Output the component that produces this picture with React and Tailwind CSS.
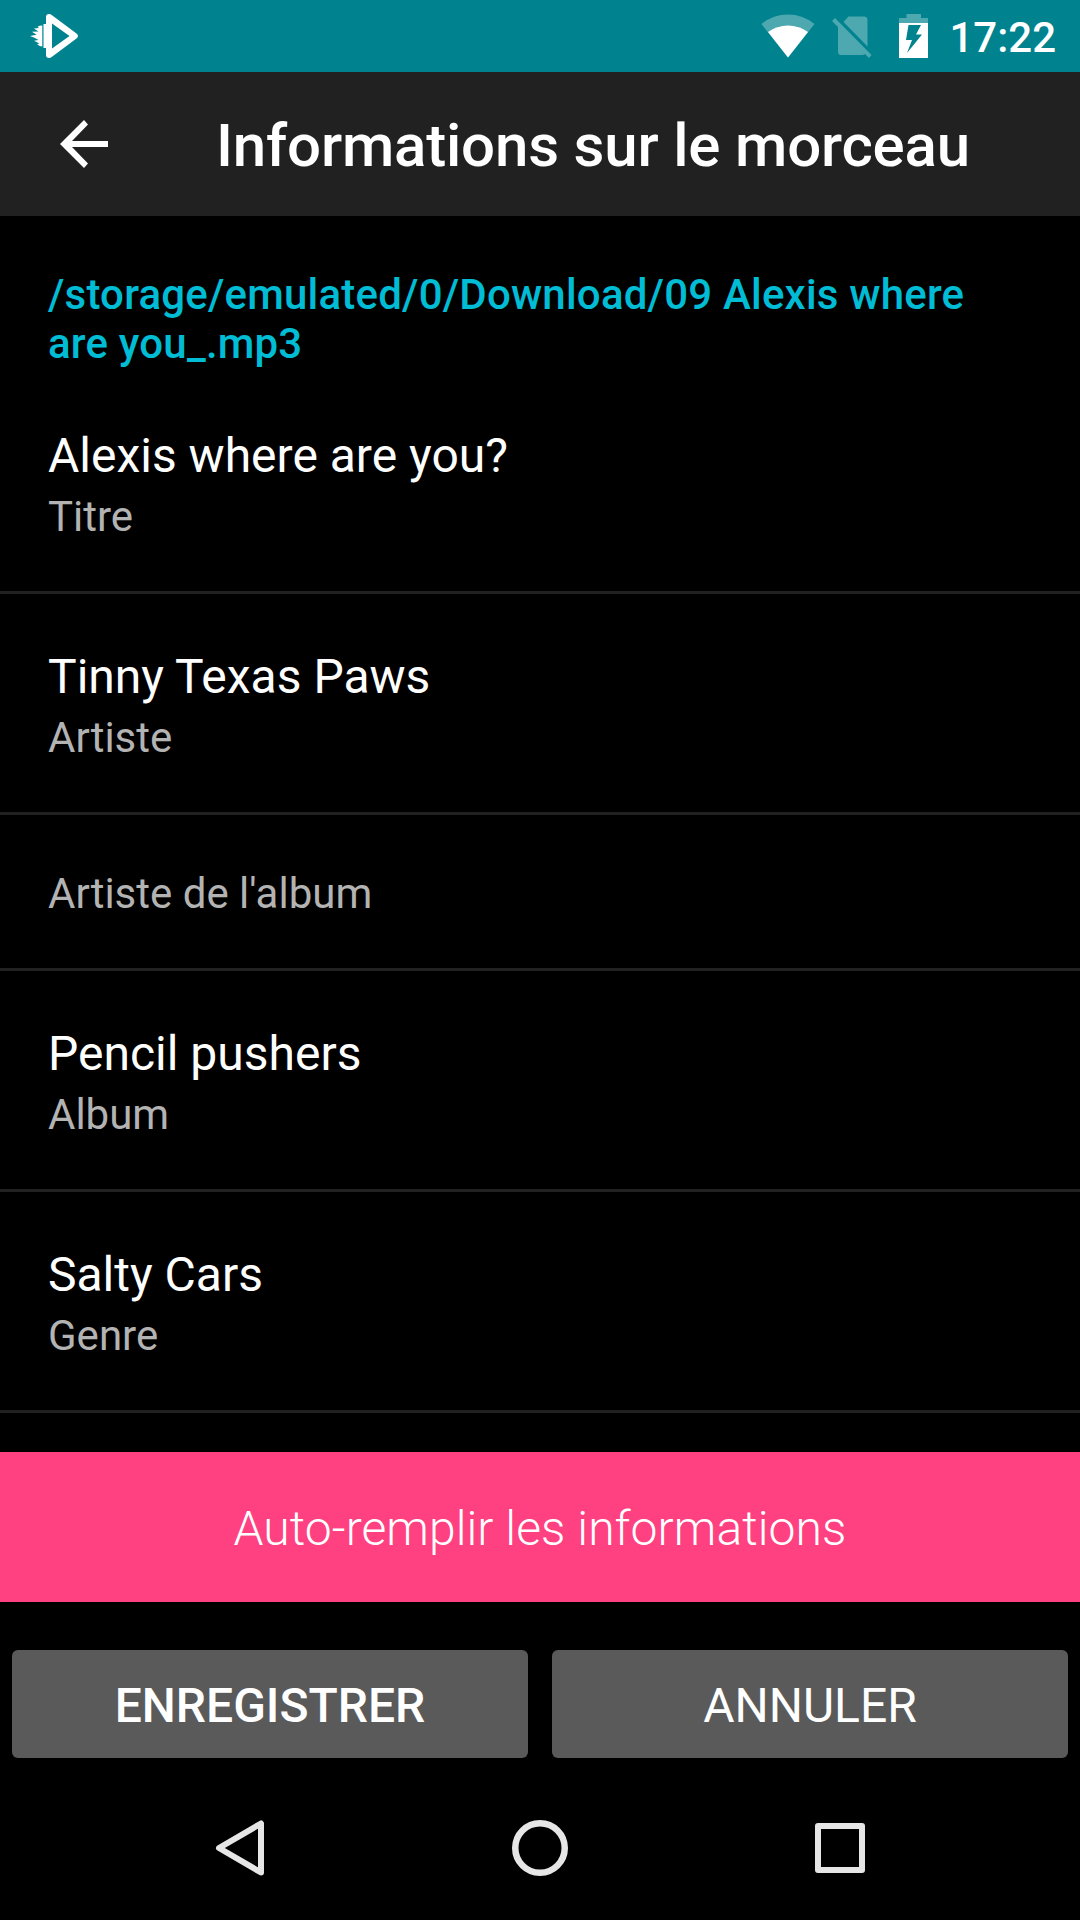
import { useState } from 'react';

const tags = [
  { id: 'title', label: 'Titre', value: 'Alexis where are you?' },
  { id: 'artist', label: 'Artiste', value: 'Tinny Texas Paws' },
  { id: 'albumArtist', label: "Artiste de l'album", value: '' },
  { id: 'album', label: 'Album', value: 'Pencil pushers' },
  { id: 'genre', label: 'Genre', value: 'Salty Cars' },
];

function StatusBar() {
  return (
    <div className="flex h-[72px] shrink-0 items-center justify-between bg-[#00838f] pl-[30px] pr-[24px]">
      {/* Player notification */}
      <svg className="h-[44px] w-[48px]" viewBox="0 0 48 44">
        <path
          fillRule="evenodd"
          fill="#fff"
          d="M16 3Q16 0 19 0Q20.600 0 22 1.200L46.500 19.500Q49.500 22 46.500 24.500L22 42.800Q20.600 44 19 44Q16 44 16 41ZM22 9.500V34.500L39.500 22Z"
        />
        <path fill="#fff" d="M13.500 10H16V34H13.500Z" />
        <path
          fill="#fff"
          d="M12.300 11.500V32.500Q9.500 32.500 7 30L9.500 29.500L4 26.800L8.500 26L4.500 23.800L0 22L6.500 20.800L2 17.800L8.500 17.500L4 14.500L9 14L7.500 12.800Q9.500 11.500 12.300 11.500Z"
        />
      </svg>

      <div className="flex items-center">
        {/* Wifi */}
        <svg className="h-[44px] w-[54px]" viewBox="0 0 54 44">
          <path fill="#fff" fillOpacity="0.3" d="M27 43.500L0.500 10Q12 0.500 27 0.500T53.500 10Z" />
          <path fill="#fff" d="M27 43.500L7 18Q16 11.500 27 11.500T47 18Z" />
        </svg>
        {/* No SIM */}
        <svg className="ml-[17px] h-[44px] w-[40px]" viewBox="0 0 40 44">
          <g fill="#fff" fillOpacity="0.3">
            <path d="M16.500 2.500H32Q35.500 2.500 35.500 6V32.500L11.500 8Z" />
            <path d="M6 13L0 7L3 4L39.500 41L37 44L33 40Q32 41 30 41H9Q6 41 6 38Z" />
          </g>
        </svg>
        {/* Battery charging */}
        <svg className="ml-[27px] h-[44px] w-[30px]" viewBox="0 0 30 44">
          <path fill="#fff" fillOpacity="0.3" d="M7.500 0H22V4H29V9H0V4H7.500Z" />
          <path
            fill="#fff"
            fillRule="evenodd"
            d="M0 9H29V44H0ZM9.500 11L7 26H13L8 39L23 20.500H17L22 11Z"
          />
        </svg>
        <span className="ml-[20px] pt-[3px] text-[42px] leading-[48px] font-medium">17:22</span>
      </div>
    </div>
  );
}

function Toolbar({ title }) {
  return (
    <header className="flex h-[144px] shrink-0 items-center bg-[#212121] pl-[60px]">
      <button aria-label="Retour" className="mr-[107px]">
        <svg className="block h-[48px] w-[49px]" viewBox="0 0 49 48">
          <path fill="#fff" d="M48 21V27H12L28 43.600L24 48L0 24L24 0L28 4.400L12 21Z" />
        </svg>
      </button>
      <h1 className="pt-[4px] text-[60px] leading-[70px] font-medium tracking-[-0.18px] whitespace-nowrap">
        {title}
      </h1>
    </header>
  );
}

function TagRow({ label, value }) {
  return (
    <div
      className={`flex flex-col border-b-[3px] border-[#212121] px-[48px] ${
        value ? 'h-[221px] pt-[55px]' : 'h-[156px] pt-[54px]'
      }`}
    >
      {value && <p className="mb-[8px] text-[48px] leading-[56px]">{value}</p>}
      <p className="text-[42px] leading-[49px] text-[#b3b3b3]">{label}</p>
    </div>
  );
}

function NavigationBar() {
  return (
    <nav className="flex h-[144px] shrink-0 items-center justify-between px-[210px]">
      <svg className="h-[60px] w-[60px]" viewBox="0 0 60 60" fill="none" stroke="#e6e6e6" strokeWidth="6">
        <path strokeLinejoin="round" d="M9 30L51 5.500V54.500Z" />
      </svg>
      <svg className="h-[60px] w-[60px]" viewBox="0 0 60 60" fill="none" stroke="#e6e6e6" strokeWidth="6.500">
        <circle cx="30" cy="30" r="24.750" />
      </svg>
      <svg className="h-[60px] w-[60px]" viewBox="0 0 60 60" fill="none" stroke="#e6e6e6" strokeWidth="6">
        <path strokeLinejoin="round" d="M8 8H52V52H8Z" />
      </svg>
    </nav>
  );
}

export default function App() {
  const [fields] = useState(tags);

  return (
    <div className="flex h-[1920px] w-[1080px] flex-col overflow-hidden bg-black font-['Roboto',sans-serif] text-white">
      <StatusBar />
      <Toolbar title="Informations sur le morceau" />

      {/* Tags of the track */}
      <main className="h-[1236px] shrink-0 overflow-hidden">
        <p className="pt-[54px] pr-[72px] pl-[48px] text-[42px] leading-[49px] font-medium tracking-[0.2px] text-[#00bcd4]">
          /storage/emulated/0/Download/09 Alexis where are you_.mp3
        </p>
        <div className="mt-[5px]">
          {fields.map((field) => (
            <TagRow key={field.id} label={field.label} value={field.value} />
          ))}
        </div>
      </main>

      {/* Actions */}
      <button className="h-[150px] shrink-0 bg-[#ff4081] pt-[4px] text-[48px] leading-[56px] font-light tracking-[0.07px]">
        Auto-remplir les informations
      </button>
      <div className="flex h-[174px] shrink-0 gap-[24px] px-[12px] pt-[48px]">
        <button className="h-[108px] flex-1 rounded-[6px] bg-[#5a5a5b] pt-[3px] text-[48px] leading-[56px] font-medium uppercase">
          Enregistrer
        </button>
        <button className="h-[108px] flex-1 rounded-[6px] bg-[#5a5a5b] pt-[3px] text-[48px] leading-[56px] uppercase">
          Annuler
        </button>
      </div>

      <NavigationBar />
    </div>
  );
}
